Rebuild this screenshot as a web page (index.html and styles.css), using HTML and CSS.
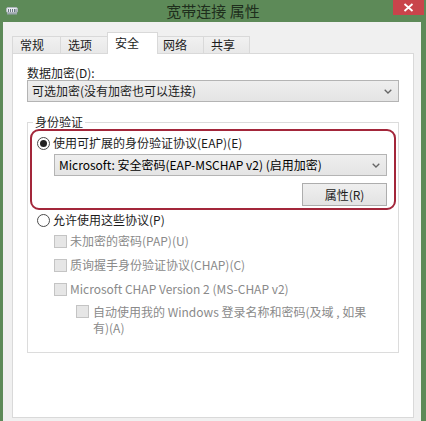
FILE: index.html
```html
<!DOCTYPE html>
<html lang="zh-CN">
<head>
<meta charset="utf-8">
<title>宽带连接 属性</title>
<link rel="stylesheet" href="styles.css">
</head>
<body>
<div class="window">
  <div class="titlebar">
    <svg class="app-icon" width="12" height="8" viewBox="0 0 12 8">
      <rect x="0.5" y="0.5" width="11" height="5" rx="1.5" fill="#e8ecef" stroke="#aeb6bc"/>
      <path d="M2.5 2v3M4.5 2v3M6.5 2v3M8.5 2v3M10 2v3" stroke="#5a6a74" stroke-width="0.9"/>
      <rect x="1" y="6" width="10" height="1.5" fill="#9aa5ad"/>
    </svg>
    <div class="title">宽带连接 属性</div>
    <div class="close">
      <svg width="11" height="9" viewBox="0 0 11 9"><path d="M1.5 1L9.5 8M9.5 1L1.5 8" stroke="#fff" stroke-width="1.8"/></svg>
    </div>
  </div>
  <div class="frame">
    <div class="tabs">
      <div class="tab t1">常规</div>
      <div class="tab t2">选项</div>
      <div class="tab t3 active">安全</div>
      <div class="tab t4">网络</div>
      <div class="tab t5 last">共享</div>
    </div>
    <div class="panel">
      <div class="label">数据加密(D):</div>
      <div class="combo">
        <span>可选加密(没有加密也可以连接)</span>
        <svg class="chev" width="8" height="5" viewBox="0 0 8 5"><path d="M0.7 0.7L4 4L7.3 0.7" fill="none" stroke="#666" stroke-width="1.3"/></svg>
      </div>
      <fieldset class="group">
        <legend>身份验证</legend>
        <div class="highlight">
          <div class="row radio-row">
            <span class="radio checked"></span>
            <span class="text">使用可扩展的身份验证协议(EAP)(E)</span>
          </div>
          <div class="combo combo2">
            <span>Microsoft: 安全密码(EAP-MSCHAP v2) (启用加密)</span>
            <svg class="chev" width="8" height="5" viewBox="0 0 8 5"><path d="M0.7 0.7L4 4L7.3 0.7" fill="none" stroke="#666" stroke-width="1.3"/></svg>
          </div>
          <div class="btn-row">
            <div class="button">属性(R)</div>
          </div>
        </div>
        <div class="row radio-row second">
          <span class="radio"></span>
          <span class="text">允许使用这些协议(P)</span>
        </div>
        <div class="row check-row first">
          <span class="check"></span>
          <span class="text dim">未加密的密码(PAP)(U)</span>
        </div>
        <div class="row check-row">
          <span class="check"></span>
          <span class="text dim">质询握手身份验证协议(CHAP)(C)</span>
        </div>
        <div class="row check-row">
          <span class="check"></span>
          <span class="text dim">Microsoft CHAP Version 2 (MS-CHAP v2)</span>
        </div>
        <div class="row check-row nested">
          <span class="check"></span>
          <span class="text dim">自动使用我的 Windows 登录名称和密码(及域 , 如果<br>有)(A)</span>
        </div>
      </fieldset>
    </div>
  </div>
</div>
</body>
</html>
```
FILE: styles.css
```css
* { box-sizing: border-box; }
html, body { margin: 0; padding: 0; background: #fff; }
body {
  font-family: "Noto Sans CJK SC", "Noto Sans", sans-serif;
  font-size: 12px;
  color: #1c1c1c;
}
.window {
  width: 426px;
  height: 421px;
  background: #5d8a58;
  display: flex;
  flex-direction: column;
}
.titlebar {
  height: 22px;
  background: #5d8a58;
  display: grid;
  grid-template-columns: 1fr auto 1fr;
  align-items: start;
}
.app-icon { margin: 7px 0 0 6px; }
.title {
  font-size: 15px;
  line-height: 20px;
  color: #1e2e1c;
  padding-top: 1px;
}
.close {
  justify-self: end;
  width: 31px;
  height: 15px;
  margin-right: 2px;
  background: #c9444b;
  display: flex;
  align-items: center;
  justify-content: center;
}
.frame {
  flex: 1;
  background: #f0f0f0;
  margin: 0 5px 0 3px;
  padding: 10px 7px 3px 9px;
  display: flex;
  flex-direction: column;
}
.tabs {
  display: flex;
  align-items: flex-end;
  height: 21px;
}
.tab {
  height: 17px;
  border: 1px solid #d9d9d9;
  border-bottom: none;
  border-right: none;
  background: linear-gradient(#f1f1f1, #e8e8e8);
  line-height: 15px;
  padding-left: 7px;
  color: #1c1c1c;
}
.t1 { width: 48px; }
.t2 { width: 47px; }
.t3 { width: 51px; }
.t4 { width: 45px; padding-left: 5px; }
.t5 { width: 47px; }
.tab.last { border-right: 1px solid #d9d9d9; }
.tab.active {
  height: 22px;
  background: #fff;
  border-right: 1px solid #d9d9d9;
  margin-bottom: -1px;
  position: relative;
  z-index: 1;
  line-height: 20px;
}
.tab.active + .tab { border-left: none; }
.panel {
  flex: 1;
  background: #fff;
  border: 1px solid #d9d9d9;
  padding: 12px 14px 0 14px;
}
.label { line-height: 14px; }
.combo {
  height: 22px;
  border: 1px solid #b4b4b4;
  background: linear-gradient(#eeeeee, #e4e4e4);
  display: flex;
  align-items: center;
  justify-content: space-between;
  padding: 0 6px 0 4px;
  line-height: 20px;
}
.chev { flex: none; }
.group {
  margin: 13px 0 0 0;
  padding: 0 0 16px 0;
  border: 1px solid #dcdcdc;
  min-width: 0;
}
.group legend {
  margin-left: 5px;
  padding: 0 2px;
  line-height: 14px;
  color: #1c1c1c;
}
.highlight {
  margin: 0 2px 0 2px;
  border: 2px solid #a3263a;
  border-radius: 9px;
  padding: 4px 0 2px 0;
}
.row {
  display: flex;
  align-items: center;
  line-height: 16px;
}
.radio-row { padding-left: 5px; }
.radio-row.second { padding-left: 9px; margin-top: 2px; }
.radio {
  width: 13px;
  height: 13px;
  border-radius: 50%;
  border: 1px solid #4b4b4b;
  background: #fff;
  margin-right: 3px;
  flex: none;
  display: flex;
  align-items: center;
  justify-content: center;
}
.radio.checked::after {
  content: "";
  width: 7px;
  height: 7px;
  border-radius: 50%;
  background: #222;
}
.combo2 {
  margin: 3px 7px 0 22px;
  color: #000;
}
.button {
  width: 85px;
  height: 23px;
  border: 1px solid #adadad;
  background: linear-gradient(#efefef, #e3e3e3);
  text-align: center;
  line-height: 21px;
  color: #1c1c1c;
}
.btn-row {
  display: flex;
  justify-content: flex-end;
  margin: 7px 7px 0 0;
}
.check-row { padding-left: 26px; margin-top: 8px; }
.check-row.first { margin-top: 5px; }
.check {
  width: 13px;
  height: 13px;
  border: 1px solid #c4c4c4;
  background: #e6e6e6;
  margin-right: 3px;
  flex: none;
}
.dim { color: #8a8a8a; }
.check-row.nested {
  padding-left: 48px;
  align-items: flex-start;
  line-height: 16px;
  margin-top: 7px;
}
.check-row.nested .check { margin-top: 1px; margin-right: 4px; }
```
